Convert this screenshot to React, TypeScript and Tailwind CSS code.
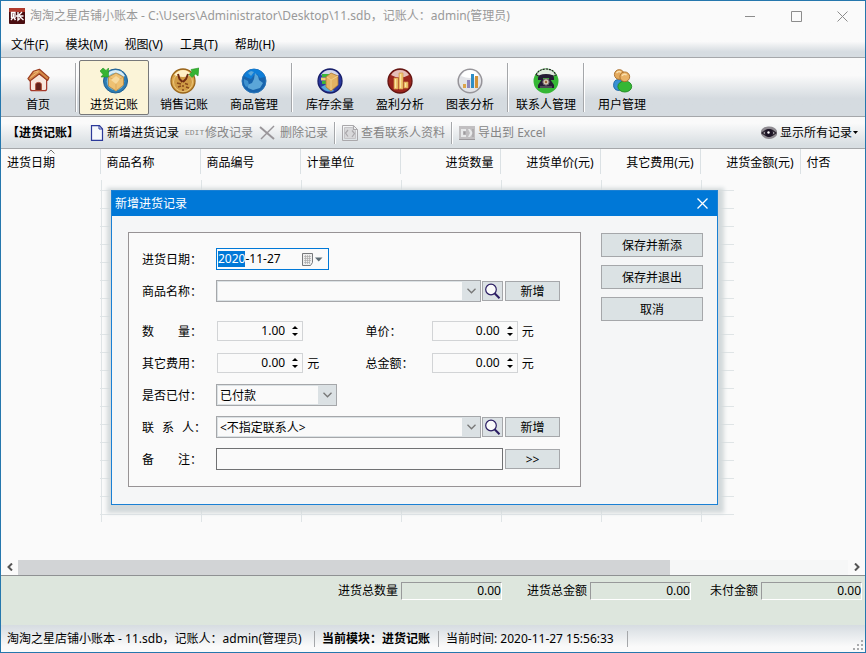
import { useEffect, useRef, type ReactNode } from "react";

const menus = ["文件(F)", "模块(M)", "视图(V)", "工具(T)", "帮助(H)"];

const columns = [
  { label: "进货日期", sorted: true },
  { label: "商品名称" },
  { label: "商品编号" },
  { label: "计量单位" },
  { label: "进货数量", right: true },
  { label: "进货单价(元)", right: true },
  { label: "其它费用(元)", right: true },
  { label: "进货金额(元)", right: true },
];

const totals = [
  { id: "total-qty", label: "进货总数量" },
  { id: "total-amount", label: "进货总金额" },
  { id: "total-unpaid", label: "未付金额" },
];

export default function App() {
  return (
    <div className="relative flex min-h-screen flex-col border border-[#2577ad] bg-[#fafafa] font-['Noto_Sans','Noto_Sans_CJK_SC',sans-serif] text-xs leading-4 text-black">
      <TitleBar />
      <MenuBar />
      <MainToolbar />
      <ActionBar />
      <RecordTable />
      <HorizontalScroll />
      <Summary />
      <StatusBar />
      <RecordDialog />
    </div>
  );
}

function TitleBar() {
  return (
    <header className="flex h-[30px] items-center justify-between pl-2">
      <div className="flex items-center gap-[5px]">
        <AppLogo />
        <h1 className="whitespace-nowrap text-[#999]">
          淘淘之星店铺小账本 - C:\Users\Administrator\Desktop\11.sdb，记账人：admin(管理员)
        </h1>
      </div>
      <div className="flex text-[#8c8c8c]">
        <button aria-label="最小化" className="flex h-7 w-[46px] items-center justify-center">
          <svg width="11" height="11" stroke="currentColor" fill="none">
            <path d="M0 5.5h10" />
          </svg>
        </button>
        <button aria-label="最大化" className="flex h-7 w-[46px] items-center justify-center">
          <svg width="11" height="11" stroke="currentColor" fill="none">
            <path d="M.5.5h10v10H.5z" />
          </svg>
        </button>
        <button aria-label="关闭" className="flex h-7 w-[46px] items-center justify-center">
          <svg width="11" height="11" stroke="currentColor" fill="none">
            <path d="M.5.5l10 10M10.5.5l-10 10" />
          </svg>
        </button>
      </div>
    </header>
  );
}

function MenuBar() {
  return (
    <nav className="flex h-[27px] items-center gap-[17px] border-b border-[#a5a7aa] bg-linear-to-b from-[#fafafa] from-40% to-[#d6dce1] to-80% pt-[2px] pl-[10px]">
      {menus.map((menu) => (
        <button key={menu} className="whitespace-nowrap">
          {menu}
        </button>
      ))}
    </nav>
  );
}

function MainToolbar() {
  return (
    <div className="flex h-[59px] items-center border-b border-[#a5a7aa] bg-linear-to-b from-[#fafafa] from-30% to-[#d5dbe0] to-70% pl-[2px]">
      <ToolButton label="首页" icon={<HomeIcon />} />
      <ToolDivider />
      <ToolButton label="进货记账" icon={<PurchaseIcon />} active />
      <ToolButton label="销售记账" icon={<SalesIcon />} />
      <ToolButton label="商品管理" icon={<GlobeIcon />} />
      <ToolDivider />
      <ToolButton label="库存余量" icon={<StockIcon />} />
      <ToolButton label="盈利分析" icon={<ProfitIcon />} />
      <ToolButton label="图表分析" icon={<ChartIcon />} />
      <ToolDivider />
      <ToolButton label="联系人管理" icon={<PhoneIcon />} />
      <ToolDivider />
      <ToolButton label="用户管理" icon={<UsersIcon />} />
    </div>
  );
}

function ToolButton({ label, icon, active }: { label: string; icon: ReactNode; active?: boolean }) {
  return (
    <button
      className={`flex h-[55px] w-[70px] flex-col items-center justify-end gap-[3px] rounded-[2px] border pb-px whitespace-nowrap ${
        active ? "border-[#77787a] bg-[#fbf4d8]" : "border-transparent"
      }`}
    >
      {icon}
      <span>{label}</span>
    </button>
  );
}

function ToolDivider() {
  return (
    <div className="flex h-[49px] w-[6px] justify-center">
      <div className="w-[2px] border-r border-l border-r-white border-l-[#a5a7aa]" />
    </div>
  );
}

function ActionBar() {
  return (
    <div className="flex h-8 items-center border-b border-[#a5a7aa] bg-linear-to-b from-[#fafafa] from-20% to-[#d8dee2] to-90% pr-[7px] pl-[6px] whitespace-nowrap">
      <strong className="w-[83px]">【进货记账】</strong>
      <ActionButton label="新增进货记录" icon={<PageIcon />} />
      <ActionButton label="修改记录" icon={<EditIcon />} muted />
      <ActionButton label="删除记录" icon={<CrossIcon />} muted />
      <ActionDivider />
      <ActionButton label="查看联系人资料" icon={<ContactIcon />} muted />
      <ActionDivider />
      <ActionButton label="导出到 Excel" icon={<ExportIcon />} muted />
      <button className="ml-auto flex items-center gap-[3px]">
        <EyeIcon />
        显示所有记录
        <svg width="5" height="3" className="-ml-[2px]">
          <path d="M0 0h5L2.5 3z" />
        </svg>
      </button>
    </div>
  );
}

function ActionButton({ label, icon, muted }: { label: string; icon: ReactNode; muted?: boolean }) {
  return (
    <button
      disabled={muted}
      className={`mr-[6px] flex items-center gap-[3px] ${muted ? "text-[#858585]" : ""}`}
    >
      {icon}
      {label}
    </button>
  );
}

function ActionDivider() {
  return <div className="mr-[6px] h-[22px] w-[2px] border-r border-l border-r-white border-l-[#a5a7aa]" />;
}

function RecordTable() {
  return (
    <main className="relative flex-1 overflow-hidden">
      <table className="w-full table-fixed border-collapse">
        <thead>
          <tr className="h-[25px]">
            {columns.map((col) => (
              <th
                key={col.label}
                className={`relative w-[100px] border-r border-[#dbe1e4] pt-[2px] pr-[6px] font-normal whitespace-nowrap first:w-[99px] ${
                  col.right ? "text-right" : "pl-[6px] text-left"
                }`}
              >
                {col.label}
                {col.sorted && (
                  <svg width="8" height="5" fill="none" stroke="#777" className="absolute top-0 left-[46px]">
                    <path d="M.5 4.5L4 1l3.5 3.5" />
                  </svg>
                )}
              </th>
            ))}
            <th className="px-[6px] pt-[2px] text-left font-normal">付否</th>
          </tr>
        </thead>
      </table>
      {/* cell lines that show round the dialog */}
      <div className="absolute top-[31px] left-[99px] h-[342px] w-[634px] bg-[linear-gradient(to_right,#dfe4e6_1px,transparent_1px),linear-gradient(to_bottom,#dfe4e6_1px,transparent_1px)] bg-[size:100px_18px] bg-[position:1px_10px]" />
    </main>
  );
}

function HorizontalScroll() {
  return (
    <div className="flex h-[17px] items-center border-b border-[#8f9193] text-[#555]">
      <button aria-label="向左滚动" className="flex h-full w-[17px] items-center justify-center">
        <svg width="6" height="8" fill="none" stroke="currentColor" strokeWidth="2">
          <path d="M5 .5L1.5 4 5 7.5" />
        </svg>
      </button>
      <div className="h-[15px] flex-1 bg-[#f6f7f7]">
        <div className="h-full w-11/14 bg-[#d2d4d6]" />
      </div>
      <button aria-label="向右滚动" className="flex h-full w-[17px] items-center justify-center">
        <svg width="6" height="8" fill="none" stroke="currentColor" strokeWidth="2">
          <path d="M1 .5L4.5 4 1 7.5" />
        </svg>
      </button>
    </div>
  );
}

function Summary() {
  return (
    <div className="flex h-[49px] items-start justify-end gap-[19px] bg-[#dde6dd] pt-[5px] pr-[3px]">
      {totals.map((total) => (
        <div key={total.id} className="flex h-[19px] items-center gap-[3px] whitespace-nowrap even:pl-[6px]">
          <label htmlFor={total.id}>{total.label}</label>
          <input
            id={total.id}
            readOnly
            defaultValue="0.00"
            className="h-[18px] w-[101px] border border-t-[#98999a] border-r-white border-b-white border-l-[#98999a] bg-transparent text-right outline-none"
          />
        </div>
      ))}
    </div>
  );
}

function StatusBar() {
  return (
    <footer className="flex h-[27px] items-center bg-linear-to-b from-[#d6dce1] to-[#fafafa] to-80% pl-[6px] whitespace-nowrap">
      <span className="min-w-[307px]">淘淘之星店铺小账本 - 11.sdb，记账人：admin(管理员)</span>
      <strong className="min-w-[124px] border-l border-[#a5a7aa] px-[7px]">当前模块：进货记账</strong>
      <span className="min-w-[190px] border-r border-l border-[#a5a7aa] px-[7px]">
        当前时间: 2020-11-27 15:56:33
      </span>
      <svg width="11" height="11" fill="#a9abad" className="mr-px mb-px ml-auto self-end">
        <path d="M8 0h2v2H8zM4 4h2v2H4zM8 4h2v2H8zM0 8h2v2H0zM4 8h2v2H4zM8 8h2v2H8z" />
      </svg>
    </footer>
  );
}

function RecordDialog() {
  const dateRef = useRef<HTMLInputElement>(null);

  // the year part is the one being edited when the dialog opens
  useEffect(() => {
    dateRef.current?.focus();
    dateRef.current?.setSelectionRange(0, 4);
  }, []);

  return (
    <div
      role="dialog"
      aria-label="新增进货记录"
      className="absolute top-[189px] left-[110px] w-[607px] border border-[#1a80d4] bg-[#f5f6f7] shadow-[1px_3px_4px_5px_#d3d9db]"
    >
      <div className="flex h-[25px] items-center justify-between bg-[#0078d7] pr-[9px] pl-[3px] text-white">
        <h2>新增进货记录</h2>
        <button aria-label="关闭对话框">
          <svg width="11" height="11" fill="none" stroke="currentColor" strokeWidth="1.3">
            <path d="M.5.5l10 10M10.5.5l-10 10" />
          </svg>
        </button>
      </div>
      <form className="flex items-start justify-between pt-4 pr-[14px] pb-[17px] pl-4">
        <div className="flex w-[453px] flex-col gap-[10px] border border-[#979395] bg-[#fafafa] pt-[15px] pb-4 pl-[13px]">
          <Row>
            <FieldLabel id="date">进货日期：</FieldLabel>
            <div className="flex h-[22px] w-[113px] items-center border border-[#0078d7] pr-[5px] pl-px">
              <input
                id="date"
                ref={dateRef}
                defaultValue="2020-11-27"
                className="h-4 w-[84px] bg-transparent outline-none selection:bg-[#0078d7] selection:text-white"
              />
              <button type="button" aria-label="选择日期">
                <CalendarIcon />
              </button>
            </div>
          </Row>
          <Row>
            <FieldLabel id="product">商品名称：</FieldLabel>
            <Combo id="product" value="" />
            <SearchButton label="查找商品" />
            <SmallButton>新增</SmallButton>
          </Row>
          <Row className="mt-2">
            <FieldLabel id="qty">数　　量：</FieldLabel>
            <Spinner id="qty" value="1.00" />
            <Unit />
            <FieldLabel id="price" narrow>
              单价：
            </FieldLabel>
            <Spinner id="price" value="0.00" />
            <Unit>元</Unit>
          </Row>
          <Row>
            <FieldLabel id="fee">其它费用：</FieldLabel>
            <Spinner id="fee" value="0.00" />
            <Unit>元</Unit>
            <FieldLabel id="amount" narrow>
              总金额：
            </FieldLabel>
            <Spinner id="amount" value="0.00" />
            <Unit>元</Unit>
          </Row>
          <Row>
            <FieldLabel id="paid">是否已付：</FieldLabel>
            <Combo id="paid" value="已付款" short />
          </Row>
          <Row>
            <FieldLabel id="contact">联&ensp;&thinsp;系&ensp;&thinsp;人：</FieldLabel>
            <Combo id="contact" value="<不指定联系人>" />
            <SearchButton label="查找联系人" />
            <SmallButton>新增</SmallButton>
          </Row>
          <Row>
            <FieldLabel id="note">备　　注：</FieldLabel>
            <input id="note" className="mr-[2px] h-[22px] w-[287px] border border-[#707173] px-1 outline-none" />
            <SmallButton>&gt;&gt;</SmallButton>
          </Row>
        </div>
        <div className="flex flex-col gap-2 pt-px">
          <DialogButton>保存并新添</DialogButton>
          <DialogButton>保存并退出</DialogButton>
          <DialogButton>取消</DialogButton>
        </div>
      </form>
    </div>
  );
}

function Row({ children, className = "" }: { children: ReactNode; className?: string }) {
  return <div className={`flex h-[22px] items-center ${className}`}>{children}</div>;
}

function FieldLabel({ id, narrow, children }: { id: string; narrow?: boolean; children: ReactNode }) {
  return (
    <label htmlFor={id} className={`shrink-0 pt-[2px] whitespace-nowrap ${narrow ? "w-[65px]" : "w-[74px]"}`}>
      {children}
    </label>
  );
}

function Unit({ children }: { children?: ReactNode }) {
  return <span className="w-[63px] pt-[2px] pl-1">{children}</span>;
}

function Combo({ id, value, short }: { id: string; value: string; short?: boolean }) {
  return (
    <div className={`relative h-[22px] border border-[#a5a7aa] ${short ? "w-[121px]" : "mr-px w-[265px]"}`}>
      <select
        id={id}
        className="h-full w-full appearance-none border border-[#dbe1e4] bg-[#fafafa] pt-px pl-[2px] outline-none"
      >
        <option>{value}</option>
      </select>
      <span className="pointer-events-none absolute inset-y-0 right-0 flex w-[18px] items-center justify-center bg-[#dbe1e4]">
        <svg width="9" height="6" fill="none" stroke="#777" strokeWidth="1.3">
          <path d="M.5.8l4 4 4-4" />
        </svg>
      </span>
    </div>
  );
}

function Spinner({ id, value }: { id: string; value: string }) {
  return (
    <div className="ml-px flex h-5 w-[87px] items-center border border-[#d2d4d6] pr-1">
      <input
        id={id}
        defaultValue={value}
        inputMode="decimal"
        className="w-full min-w-0 flex-1 bg-transparent pr-[7px] text-right outline-none"
      />
      <div className="flex flex-col gap-1">
        <button type="button" aria-label="增加">
          <svg width="6" height="3" className="block">
            <path d="M0 3h6L3 0z" />
          </svg>
        </button>
        <button type="button" aria-label="减少">
          <svg width="6" height="3" className="block">
            <path d="M0 0h6L3 3z" />
          </svg>
        </button>
      </div>
    </div>
  );
}

function SearchButton({ label }: { label: string }) {
  return (
    <button
      type="button"
      aria-label={label}
      className="mr-[2px] flex h-5 w-[21px] items-center justify-center border border-[#a5a7aa] bg-[#dbe1e4]"
    >
      <svg width="17" height="17" viewBox="0 0 17 17">
        <circle cx="7" cy="6.5" r="5.3" fill="#fafafa" stroke="#2b1d63" strokeWidth="1.2" />
        <path d="M10.8 10.5l4.700 4.700" stroke="#2b1d63" strokeWidth="2" />
      </svg>
    </button>
  );
}

function SmallButton({ children }: { children: ReactNode }) {
  return (
    <button type="button" className="h-5 w-[55px] border border-[#a5a7aa] bg-[#dbe2e4] pt-[2px]">
      {children}
    </button>
  );
}

function DialogButton({ children }: { children: ReactNode }) {
  return (
    <button type="button" className="h-6 w-[102px] border border-[#a5a7aa] bg-[#dbe2e4] pt-[2px]">
      {children}
    </button>
  );
}

function AppLogo() {
  return (
    <svg width="16" height="16" viewBox="0 0 16 16">
      <rect width="16" height="16" rx="1" fill="#4a0d10" />
      <path d="M0 1q0-1 1-1h14q1 0 1 1v3H0z" fill="#b03a2c" />
      <path
        d="M2.500 10V4.500h3.500V10M4.300 5.500v3.500L2 12M4.800 9.500L6.500 12M9 4v8l2-1.500M7 8h7.500M13 4l-3 3M10.500 8.500L14.500 12"
        fill="none"
        stroke="#fff"
        strokeWidth="1.400"
      />
    </svg>
  );
}

function HomeIcon() {
  return (
    <svg width="23" height="24" viewBox="1 1 24 24" className="mb-[2px]">
      <path d="M4.5 12.5L13 6l8.500 6.500V22q0 2-2 2h-13q-2 0-2-2z" fill="#f8e6dc" stroke="#a5382b" strokeWidth="1.3" />
      <path d="M2 11.500L7.500 4 14 1.800l10 8.700-1.500 3L14 6.500 4 14z" fill="#d58a48" stroke="#9a3d20" strokeWidth="1.2" strokeLinejoin="round" />
      <path d="M4.500 10.500L13 4.200M8 5l5-1.500" stroke="#f1bb76" />
      <path d="M10 24v-6.500q0-2 3-2t3 2V24z" fill="#64211a" stroke="#b24d36" />
    </svg>
  );
}

function PurchaseIcon() {
  return (
    <svg width="29" height="27" viewBox="0 0 29 27">
      <circle cx="15.5" cy="14" r="12" fill="#2d7db4" stroke="#1f5f92" />
      <path d="M6 9q3-6 9.500-6t9.500 6q-9 5-19 0z" fill="#d9edf5" />
      <circle cx="15.500" cy="14.500" r="8.800" fill="#78b9d5" />
      <path d="M16 6l7.500 4v8L16 24l-7.500-5v-9z" fill="#eec172" stroke="#b9843b" strokeWidth=".8" />
      <path d="M8.500 10l7.500 4 7.500-4M16 14v10" stroke="#dba95c" fill="none" />
      <path d="M11 13l5-4 4 3-4 5z" fill="#f7da9e" />
      <path d="M0 4l3-3 3 2.500L8.500 1v9H1l2-2.500z" fill="#36b432" stroke="#269526" strokeWidth=".6" />
    </svg>
  );
}

function SalesIcon() {
  return (
    <svg width="29" height="27" viewBox="0 0 29 27">
      <circle cx="13" cy="14" r="12" fill="#d9a348" stroke="#99651c" strokeWidth="1.3" />
      <circle cx="13" cy="15" r="9.5" fill="#cf9b45" stroke="#eac579" />
      <path d="M4 8q4-5 9-5t9 5q-9 4-18 0z" fill="#fff0c5" />
      <path d="M8 7l1.500 5 3 3M18 7l-2 5-3 3" fill="none" stroke="#702b12" strokeWidth="2" />
      <path d="M7 16l4 1M8 20l3-1M13 18v2M13 22v2M15 16.500l3 1M16 20l3 1" fill="none" stroke="#8a4a1b" strokeWidth="1.500" />
      <path d="M21 2.500L29 1l-1 8-2.500-2-3.500 3.500-3-3L22 5z" fill="#36b432" stroke="#269526" strokeWidth=".6" />
    </svg>
  );
}

function GlobeIcon() {
  return (
    <svg width="26" height="27" viewBox="0 0 26 27">
      <circle cx="13" cy="14" r="12" fill="#1864ad" stroke="#2b76b8" />
      <path d="M3 9q3-7 10-7 8 0 11 8l-5 1-3-4-3 1-3 4-3-1z" fill="#0e7ed8" />
      <path d="M14 6l3 3 1 4 4 3-3 5-7 2-5-2-1-3 5-2 2-4z" fill="#5ba6d8" />
      <path d="M3 12l4 2 1 4-3 2q-3-4-2-8z" fill="#3f92cf" />
      <path d="M7 6l3-2 3 1-3 4z" fill="#5ba6d8" />
    </svg>
  );
}

function StockIcon() {
  return (
    <svg width="26" height="27" viewBox="0 0 26 27">
      <circle cx="13" cy="14" r="12" fill="#2a389f" stroke="#171e68" strokeWidth="1.3" />
      <path d="M4 8q3-5 9-5t9 5q-9 5-18 0z" fill="#d2d6e9" />
      <path d="M4 20l6-3 7 7q-8 2-13-4z" fill="#56a8d8" />
      <path d="M5 7h9v3H5zM5 14h9v3H5z" fill="#3ab63a" />
      <path d="M4 10.500h10v3H4z" fill="#efcf73" />
      <path d="M14 6l7 3v9l-7 6-5-4V10z" fill="#e3b262" stroke="#b07a33" strokeWidth=".8" />
      <path d="M10 10l4 3 7-4M14 13v10" fill="none" stroke="#f0cd88" />
    </svg>
  );
}

function ProfitIcon() {
  return (
    <svg width="26" height="27" viewBox="0 0 26 27">
      <circle cx="13" cy="14" r="12" fill="#9a251d" stroke="#631411" strokeWidth="1.3" />
      <path d="M4 8q3-5 9-5t9 5q-9 5-18 0z" fill="#e4bdb8" />
      <path d="M7 11h4v11H7zM12 6h4v16h-4zM17 15h4v6h-4z" fill="#efc66f" stroke="#d79a4a" strokeWidth=".7" />
      <path d="M8.500 12v9M13.500 7v14M18.500 16v4" stroke="#fbe3a4" />
    </svg>
  );
}

function ChartIcon() {
  return (
    <svg width="26" height="27" viewBox="0 0 26 27">
      <circle cx="13" cy="14" r="11.8" fill="#e3e4e8" stroke="#969499" strokeWidth="1.5" />
      <path d="M4 9q3-6 9-6t9 6q-9 4-18 0z" fill="#fff" />
      <path d="M6 17h3v4H6z" fill="#dca44c" />
      <path d="M10 13h3v8h-3z" fill="#8f86bb" />
      <path d="M14 7h3v14h-3z" fill="#2e8dc5" />
      <path d="M18 9h3v12h-3z" fill="#d39236" />
    </svg>
  );
}

function PhoneIcon() {
  return (
    <svg width="26" height="27" viewBox="0 0 26 27">
      <circle cx="13" cy="14" r="12.5" fill="#35b735" />
      <path d="M3 8q3-6 10-6t10 6q-10 3-20 0z" fill="#dfecdf" stroke="#222" strokeWidth="1.2" strokeDasharray="2 1" />
      <path d="M5 11q0-4 8-4t8 4v2h-5v-2h-6v2H5zM9 12h8l4 6v3H5v-3z" fill="#241c34" />
      <circle cx="13" cy="15" r="3.2" fill="#d7c9b4" stroke="#6c5c68" />
      <circle cx="13" cy="15" r="1.2" fill="#9b6839" />
      <path d="M7 20h12" stroke="#777" />
    </svg>
  );
}

function UsersIcon() {
  return (
    <svg width="23" height="25" viewBox="1 1 25 26" className="mb-px">
      <path d="M4 21q-1-8 5-8 6 0 7 7l-6 5q-5 0-6-4z" fill="#3991d4" stroke="#1f68a5" />
      <circle cx="10" cy="7.5" r="5.3" fill="#e4aa5d" stroke="#a96e2a" />
      <ellipse cx="16" cy="20.5" rx="7.5" ry="6" fill="#35b735" stroke="#218922" />
      <circle cx="16" cy="10" r="5.3" fill="#e9b266" stroke="#a96e2a" />
      <path d="M7 6q2-3 5-1M13 9q2-3 5-1" fill="none" stroke="#fae0af" strokeWidth="1.5" />
    </svg>
  );
}

function PageIcon() {
  return (
    <svg width="14" height="16" viewBox="0 0 14 16">
      <path d="M1.500.7h8l3 3.300v11.300h-11z" fill="#f5f8fc" stroke="#2c3a9a" strokeWidth="1.2" />
      <path d="M9 .7V4h3.500" fill="none" stroke="#2c3a9a" />
    </svg>
  );
}

function EditIcon() {
  return (
    <span aria-hidden="true" className="w-[17px] font-['Liberation_Mono',monospace] text-[8px]">
      EDIT
    </span>
  );
}

function CrossIcon() {
  return (
    <svg width="17" height="16" viewBox="0 0 17 16" fill="none" stroke="#999599" className="mr-px">
      <path d="M1 2l14 12" strokeWidth="2" />
      <path d="M15 1L2 14" strokeWidth="1.5" />
    </svg>
  );
}

function ContactIcon() {
  return (
    <svg width="16" height="16" viewBox="0 0 16 16" fill="none" stroke="#aaa8ab">
      <path d="M.5.5h11l4 4v11H.5z" />
      <path d="M2.500 2.500h8l3 3v8h-11z" fill="#d8d8da" stroke="#c5c4c7" />
      <path d="M11.500.5v4h4M6 5L3.500 8 6 11.500M10 5.500l2.500 3L10 12" strokeWidth="1.2" />
    </svg>
  );
}

function ExportIcon() {
  return (
    <svg width="16" height="16" viewBox="0 0 16 16">
      <path d="M0 1h16v14H0z" fill="#c1bfc1" />
      <path d="M2 4h5v2H4v4h3v2H2zM9 4h2l3 4-3 4H9l2-4z" fill="#e8e9ea" />
      <path d="M4.500 6.500h2v3h-2z" fill="#9d9a9d" />
      <path d="M14 4v8M0 14.500h16" stroke="#9d9a9d" />
    </svg>
  );
}

function EyeIcon() {
  return (
    <svg width="16" height="14" viewBox="0 0 16 14">
      <path d="M0 5q1-4 7-4.500 7-.5 9 4.500v4q-3 4-8 4t-8-5z" fill="#8e8a90" />
      <path d="M1 7Q8 .5 15 7 8 13 1 7z" fill="#a9a6ab" stroke="#2d2631" strokeWidth="1.2" />
      <circle cx="8" cy="7" r="4" fill="#1b1324" />
      <circle cx="7.500" cy="6.500" r="1.200" fill="#fff" />
    </svg>
  );
}

function CalendarIcon() {
  return (
    <svg width="21" height="13" viewBox="0 0 21 13">
      <path d="M.5.5h10v9l-2 3h-8z" fill="#eee" stroke="#77797c" />
      <path d="M2 3.500h7M2 5.500h7M2 7.500h7M2 9.500h6M3.500 2v9M5.500 2v9M7.500 2v9" stroke="#aaa" strokeWidth=".7" />
      <path d="M13 4.500h7.500L16.700 8.500z" fill="#5d6c75" />
    </svg>
  );
}
